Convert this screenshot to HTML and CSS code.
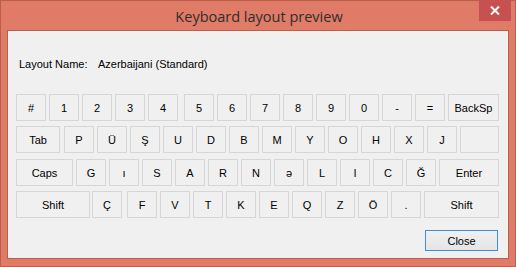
FILE: index.html
```html
<!DOCTYPE html>
<html>
<head>
<meta charset="utf-8">
<link rel="stylesheet" href="styles.css">
</head>
<body>
<div class="window">
  <div class="titlebar">
    <span class="title">Keyboard layout preview</span>
    <button class="close-x" aria-label="Close">
      <svg width="10" height="9" viewBox="0 0 10 9"><path d="M1 0.5 L9 8.5 M9 0.5 L1 8.5" stroke="#fff" stroke-width="2"/></svg>
    </button>
  </div>
  <div class="client">
    <div class="layout-line">
      <span class="label">Layout Name:</span>
      <span class="value">Azerbaijani (Standard)</span>
    </div>
    <div class="keyboard">
      <div class="row">
        <div class="key">#</div><div class="key">1</div><div class="key">2</div><div class="key">3</div><div class="key">4</div>
        <div class="key gap6">5</div><div class="key">6</div><div class="key">7</div><div class="key">8</div><div class="key">9</div>
        <div class="key">0</div><div class="key">-</div><div class="key">=</div><div class="key backsp">BackSp</div>
      </div>
      <div class="row">
        <div class="key tab">Tab</div>
        <div class="key gap4">P</div><div class="key">Ü</div><div class="key">Ş</div><div class="key">U</div><div class="key">D</div>
        <div class="key">B</div><div class="key">M</div><div class="key">Y</div><div class="key">O</div><div class="key">H</div>
        <div class="key">X</div><div class="key">J</div><div class="key blank"></div>
      </div>
      <div class="row">
        <div class="key caps">Caps</div>
        <div class="key">G</div><div class="key">ı</div><div class="key">S</div><div class="key">A</div><div class="key">R</div>
        <div class="key">N</div><div class="key">ə</div><div class="key">L</div><div class="key">I</div><div class="key">C</div>
        <div class="key">Ğ</div><div class="key enter">Enter</div>
      </div>
      <div class="row">
        <div class="key lshift">Shift</div>
        <div class="key gap2">Ç</div><div class="key gap5">F</div><div class="key">V</div><div class="key">T</div><div class="key">K</div>
        <div class="key">E</div><div class="key">Q</div><div class="key">Z</div><div class="key">Ö</div><div class="key">.</div>
        <div class="key rshift">Shift</div>
      </div>
    </div>
    <div class="actions">
      <button class="btn">Close</button>
    </div>
  </div>
</div>
</body>
</html>
```

FILE: styles.css
```css
* { box-sizing: border-box; }
html, body { margin: 0; padding: 0; background: #e07b67; }
body { font-family: "Liberation Sans", Arial, sans-serif; font-size: 11px; color: #000; }

.window {
  width: 516px;
  height: 267px;
  background: #e07b67;
  border: 1px solid #b9604d;
  padding: 0 6px 7px 6px;
  display: flex;
  flex-direction: column;
}

.titlebar {
  position: relative;
  height: 29px;
  display: flex;
  align-items: center;
  justify-content: center;
}
.title {
  font-family: "Open Sans", "Noto Sans", sans-serif;
  font-size: 14.5px;
  color: #2e2e2e;
  margin-left: 2px;
  margin-top: 1px;
}
.close-x {
  position: absolute;
  top: -1px;
  right: -2px;
  width: 32px;
  height: 21px;
  border: 0;
  padding: 0;
  background: #c75050;
  display: flex;
  align-items: center;
  justify-content: center;
}

.client {
  flex: 1;
  background: #f0f0f0;
  border: 1px solid #b9604d;
  display: flex;
  flex-direction: column;
}

.layout-line {
  display: flex;
  padding: 27px 0 0 11px;
  height: 44px;
  line-height: 13px;
}
.label { width: 79px; }

.keyboard {
  padding: 19px 0 0 8px;
  display: flex;
  flex-direction: column;
  gap: 5px;
}
.row { display: flex; gap: 3px; }
.row:nth-child(3) { margin-top: 1px; }

.key {
  width: 30px;
  height: 27px;
  border: 1px solid #d6d6d6;
  display: flex;
  align-items: center;
  justify-content: center;
  padding-top: 1px;
}
.gap6 { margin-left: 3px; }
.gap4 { margin-left: 1px; }
.gap2 { margin-left: -1px; }
.gap5 { margin-left: 2px; }
.backsp { width: 51px; }
.tab { width: 44px; }
.blank { width: 39px; }
.caps { width: 57px; }
.enter { width: 60px; }
.lshift { width: 74px; }
.rshift { width: 75px; }

.actions {
  display: flex;
  justify-content: flex-end;
  padding: 12px 10px 0 0;
}
.btn {
  width: 73px;
  height: 21px;
  border: 1px solid #3c8fe0;
  background: linear-gradient(#f0f0f0, #e5e5e5);
  font-family: "Liberation Sans", Arial, sans-serif;
  font-size: 11px;
  color: #000;
  padding: 0;
}
```
